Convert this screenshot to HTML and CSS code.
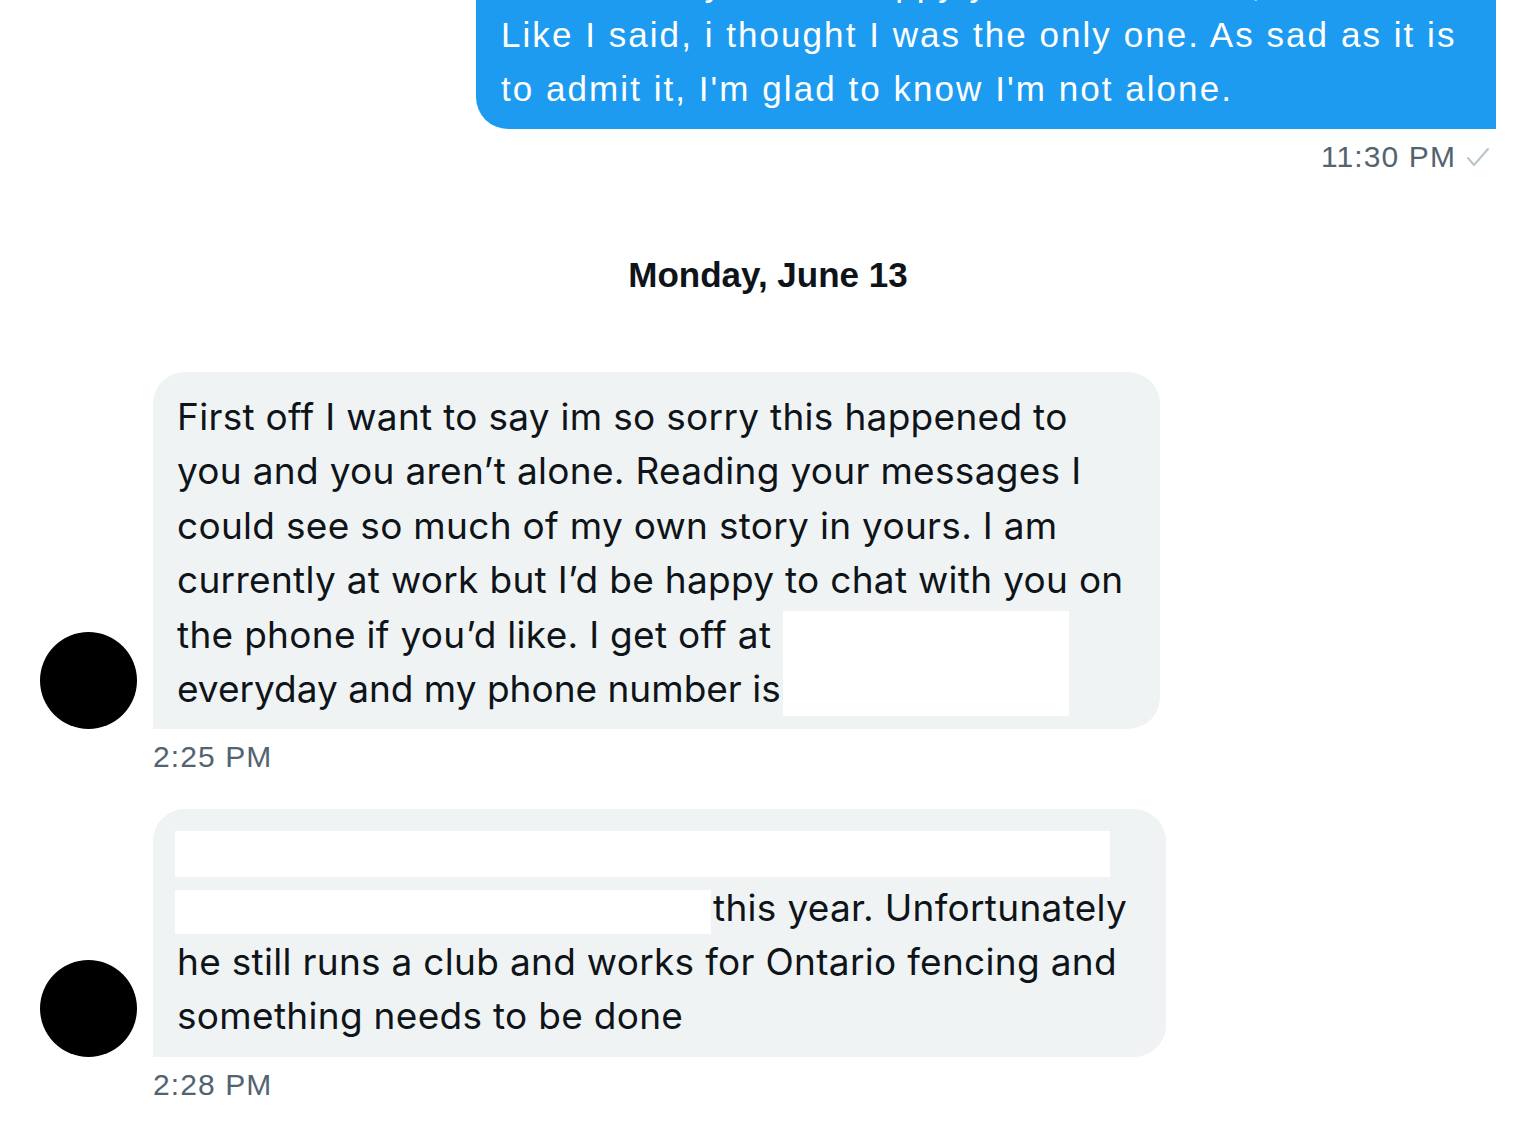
FILE: index.html
```html
<!DOCTYPE html>
<html lang="en">
<head>
<meta charset="utf-8">
<title>Messages</title>
<link rel="stylesheet" href="styles.css">
</head>
<body>
<main class="thread">
  <section class="sent">
    <div class="bubble bubble-sent">
      <span class="line">and honestly I'm so happy you reached out, it's something</span>
      <span class="line">Like I said, i thought I was the only one. As sad as it is</span>
      <span class="line">to admit it, I'm glad to know I'm not alone.</span>
    </div>
    <div class="meta meta-sent">
      <span class="time">11:30 PM</span>
      <svg class="check" width="24" height="22" viewBox="0 0 24 22" aria-hidden="true"><path d="M2 12 L8 19 L22 3" fill="none" stroke="#b8c5cd" stroke-width="2" stroke-linecap="round" stroke-linejoin="round"/></svg>
    </div>
  </section>

  <h2 class="day">Monday, June 13</h2>

  <section class="received">
    <div class="row">
      <div class="avatar"></div>
      <div class="bubble bubble-recv bubble-a">
        <span class="line">First off I want to say im so sorry this happened to</span>
        <span class="line">you and you aren’t alone. Reading your messages I</span>
        <span class="line">could see so much of my own story in yours. I am</span>
        <span class="line">currently at work but I’d be happy to chat with you on</span>
        <span class="line">the phone if you’d like. I get off at</span>
        <span class="line line-tight">everyday and my phone number is</span>
        <span class="redact redact-a"></span>
      </div>
    </div>
    <div class="meta meta-recv"><span class="time">2:25 PM</span></div>
  </section>

  <section class="received received-b">
    <div class="row">
      <div class="avatar"></div>
      <div class="bubble bubble-recv bubble-b">
        <span class="line"><span class="block block-1"></span></span>
        <span class="line"><span class="block block-2"></span>this year. Unfortunately</span>
        <span class="line">he still runs a club and works for Ontario fencing and</span>
        <span class="line">something needs to be done</span>
      </div>
    </div>
    <div class="meta meta-recv"><span class="time">2:28 PM</span></div>
  </section>
</main>
</body>
</html>
```

FILE: styles.css
```css
html, body {
  margin: 0;
  padding: 0;
  background: #ffffff;
}

body {
  width: 1536px;
  height: 1124px;
  overflow: hidden;
  font-family: "Liberation Sans", Arial, sans-serif;
  color: #0f1419;
}

.thread {
  display: flex;
  flex-direction: column;
}

.line {
  display: block;
  white-space: nowrap;
}

/* sent */
.sent {
  display: flex;
  flex-direction: column;
  align-items: flex-end;
  padding-right: 40px;
}

.bubble-sent {
  margin-top: -56px;
  width: 1020px;
  box-sizing: border-box;
  padding: 13px 25px 13px;
  background: #1d9bf0;
  color: #ffffff;
  font-family: "Liberation Sans", Arial, sans-serif;
  font-size: 35px;
  letter-spacing: 2.05px;
  line-height: 54px;
  border-radius: 32px 32px 0 32px;
}

.bubble-sent .line:first-child {
  margin-bottom: -3px;
}

.meta {
  display: flex;
  align-items: center;
  margin-top: 12px;
  height: 32px;
  font-family: "Liberation Sans", Arial, sans-serif;
  font-size: 30px;
  letter-spacing: 1.1px;
  line-height: 32px;
  color: #536471;
}

.meta-sent {
  padding-right: 6px;
  gap: 10px;
}

.check {
  display: block;
}

/* day header */
.day {
  margin: 82px 0 0;
  text-align: center;
  font-family: "Liberation Sans", Arial, sans-serif;
  font-weight: 700;
  font-size: 35px;
  line-height: 40px;
  color: #0f1419;
}

/* received */
.received {
  margin-top: 77px;
  display: flex;
  flex-direction: column;
  padding-left: 40px;
}

.received-b {
  margin-top: 36px;
}

.row {
  display: flex;
  align-items: flex-end;
  gap: 16px;
}

.avatar {
  width: 97px;
  height: 97px;
  border-radius: 50%;
  background: #000000;
  flex: none;
}

.bubble-recv {
  position: relative;
  box-sizing: border-box;
  background: #eff3f4;
  padding: 18px 25px 13px 24px;
  font-family: Inter, "Noto Sans", sans-serif;
  font-size: 37px;
  line-height: 54.4px;
  letter-spacing: 0.3px;
  color: #0f1419;
  border-radius: 32px 32px 32px 0;
}

.line-tight {
  letter-spacing: 0px;
}

.bubble-a {
  width: 1007px;
}

.bubble-b {
  width: 1013px;
  padding-top: 18px;
  padding-bottom: 14px;
  line-height: 54px;
}

.redact {
  position: absolute;
  background: #ffffff;
}

.redact-a {
  left: 630px;
  top: 239px;
  width: 286px;
  height: 105px;
}

.block {
  display: inline-block;
  background: #ffffff;
  vertical-align: top;
  margin-left: -2px;
}

.block-1 {
  width: 935px;
  height: 46px;
  margin-top: 4px;
}

.block-2 {
  width: 536px;
  height: 44px;
  margin-top: 9px;
  margin-right: 2px;
}

.meta-recv {
  padding-left: 113px;
}
```
